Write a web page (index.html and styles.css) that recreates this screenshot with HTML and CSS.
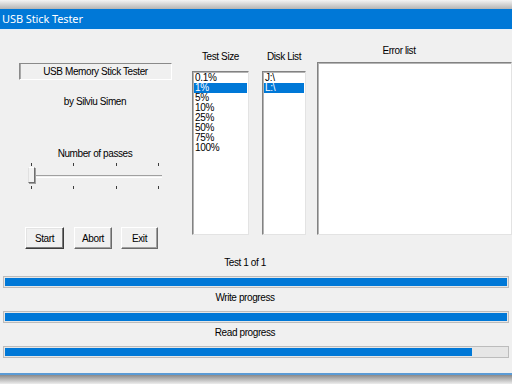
FILE: index.html
```html
<!DOCTYPE html>
<html lang="en">
<head>
    <meta charset="UTF-8">
    <title>USB Stick Tester</title>
    <link rel="stylesheet" href="styles.css">
</head>
<body>
    <div class="top-shade"></div>

    <div class="window">
        <div class="titlebar">USB Stick Tester</div>

        <div class="client">
            <div class="top-row">
                <!-- left part: caption, slider and buttons -->
                <div class="left-panel">
                    <div class="caption-box">USB Memory Stick Tester</div>
                    <div class="author">by Silviu Simen</div>
                    <div class="passes-label">Number of passes</div>
                    <div class="slider">
                        <div class="ticks ticks-top"><span></span><span></span><span></span><span></span></div>
                        <div class="track"></div>
                        <div class="thumb"></div>
                        <div class="ticks ticks-bottom"><span></span><span></span><span></span><span></span></div>
                    </div>
                    <div class="buttons">
                        <button class="btn btn-default">Start</button>
                        <button class="btn btn-abort">Abort</button>
                        <button class="btn btn-exit">Exit</button>
                    </div>
                </div>

                <div class="column col-size">
                    <div class="col-label">Test Size</div>
                    <ul class="listbox">
                        <li>0.1%</li>
                        <li class="selected">1%</li>
                        <li>5%</li>
                        <li>10%</li>
                        <li>25%</li>
                        <li>50%</li>
                        <li>75%</li>
                        <li>100%</li>
                    </ul>
                </div>

                <div class="column col-disk">
                    <div class="col-label">Disk List</div>
                    <ul class="listbox">
                        <li>J:\</li>
                        <li class="selected">L:\</li>
                    </ul>
                </div>

                <div class="column col-errors">
                    <div class="col-label">Error list</div>
                    <div class="listbox errorbox"></div>
                </div>
            </div>

            <div class="progress-area">
                <div class="prog-label">Test 1 of 1</div>
                <div class="progress"><div class="fill" style="width: 100%"></div></div>
                <div class="prog-label">Write progress</div>
                <div class="progress"><div class="fill" style="width: 100%"></div></div>
                <div class="prog-label">Read progress</div>
                <div class="progress"><div class="fill" style="width: 93%"></div></div>
            </div>
        </div>
    </div>

    <div class="bottom-shade"></div>
</body>
</html>
```

FILE: styles.css
```css
body {
    margin: 0;
    padding: 0;
    width: 512px;
    height: 384px;
    overflow: hidden;
    background-color: #ffffff;
    font-family: 'Liberation Sans', Arial, sans-serif;
    font-size: 10px;
    color: #000;
}

.top-shade {
    height: 9px;
    background: linear-gradient(#f4f4f4, #b4b4b4);
}

.window {
    background-color: #f0f0f0;
    border-bottom: 2px solid #5b9bd5;
}

.titlebar {
    height: 20px;
    line-height: 20px;
    padding-left: 2px;
    background-color: #0078d7;
    color: #fff;
    font-family: 'Noto Sans', sans-serif;
    font-size: 11px;
    letter-spacing: -0.1px;
}

.client {
    height: 343px;
    border-top: 1px solid #e6f0fa;
}

.top-row {
    display: flex;
    height: 219px;
}

/* left part */
.left-panel {
    width: 190px;
    padding-top: 33px;
    display: flex;
    flex-direction: column;
    box-sizing: border-box;
}

.caption-box {
    margin: 0 18px 0 19px;
    height: 17px;
    line-height: 15px;
    text-align: center;
    box-sizing: border-box;
    border: 1px solid;
    border-color: #8a8a8a #ffffff #ffffff #8a8a8a;
    box-shadow: inset 1px 0 #a8a8a8;
    letter-spacing: -0.4px;
}

.author {
    margin-top: 15px;
    line-height: 13px;
    text-align: center;
    letter-spacing: -0.4px;
}

.passes-label {
    margin-top: 39px;
    line-height: 13px;
    text-align: center;
    letter-spacing: -0.4px;
}

.slider {
    position: relative;
    margin: 1px 28px 0 27px;
    height: 28px;
}

.ticks {
    display: flex;
    justify-content: space-between;
    padding: 0 3px 0 4px;
}

.ticks span {
    width: 1px;
    height: 3px;
    background-color: #3c3c3c;
}

.ticks-top {
    padding-top: 2px;
}

.track {
    margin-top: 9px;
    margin-left: 4px;
    height: 1px;
    border-top: 1px solid #a0a0a0;
    border-bottom: 1px solid #ffffff;
}

.ticks-bottom {
    margin-top: 8px;
}

.thumb {
    position: absolute;
    left: 1px;
    top: 6px;
    width: 7px;
    height: 16px;
    box-sizing: border-box;
    background-color: #f2f2f2;
    border: 1px solid;
    border-color: #ffffff #6e6e6e #6e6e6e #e0e0e0;
    box-shadow: 1px 1px 0 #a0a0a0;
}

.buttons {
    display: flex;
    margin-top: 38px;
    padding-left: 25px;
}

.btn {
    flex: none;
    height: 22px;
    padding: 0;
    font-family: 'Liberation Sans', Arial, sans-serif;
    font-size: 10px;
    letter-spacing: -0.4px;
    color: #000;
    background-color: #f0f0f0;
    box-sizing: border-box;
    border: 1px solid;
    border-color: #ffffff #6a6a6a #6a6a6a #ffffff;
    box-shadow: inset -1px -1px #a0a0a0;
}

.btn-default {
    width: 39px;
    border-color: #ffffff #3c3c3c #3c3c3c #ffffff;
    box-shadow: inset -1px -1px #7a7a7a, inset 1px 1px #e3e3e3;
}

.btn-abort {
    width: 38px;
    margin-left: 10px;
}

.btn-exit {
    width: 37px;
    margin-left: 9px;
}

/* list columns */
.column {
    display: flex;
    flex-direction: column;
}

.col-label {
    line-height: 13px;
    text-align: center;
    letter-spacing: -0.4px;
}

.col-size {
    width: 57px;
    margin-left: 2px;
    padding-top: 20px;
}

.col-disk {
    width: 44px;
    margin-left: 13px;
    padding-top: 20px;
}

.col-size .col-label,
.col-disk .col-label {
    margin-bottom: 8px;
}

.col-errors {
    flex: 1;
    margin-left: 11px;
    padding-top: 14px;
}

.col-errors .col-label {
    margin-bottom: 5px;
    padding-right: 31px;
}

.listbox {
    list-style: none;
    margin: 0;
    padding: 0 1px;
    height: 164px;
    box-sizing: border-box;
    background-color: #fff;
    border: 1px solid;
    border-color: #828282 #e3e3e3 #e3e3e3 #828282;
    box-shadow: inset 1px 1px #b4b4b4;
}

.listbox li {
    height: 10px;
    line-height: 10px;
    padding-left: 1px;
    letter-spacing: -0.3px;
}

.listbox li:first-child {
    margin-top: 1px;
}

.listbox li.selected {
    background-color: #0078d7;
    color: #fff;
}

.errorbox {
    height: 173px;
}

/* progress bars */
.progress-area {
    padding: 7px 3px 0 3px;
}

.prog-label {
    line-height: 13px;
    text-align: center;
    padding-right: 22px;
    letter-spacing: -0.4px;
}

.progress {
    height: 12px;
    margin: 7px 0 3px 0;
    box-sizing: border-box;
    background-color: #e6e6e6;
    border: 1px solid #bcbcbc;
    padding: 1px;
}

.progress + .prog-label {
    margin-top: 1px;
}

.fill {
    height: 100%;
    background-color: #0078d7;
}

.bottom-shade {
    height: 10px;
    background: linear-gradient(#8a8a8a, #f8f8f8);
}
```
